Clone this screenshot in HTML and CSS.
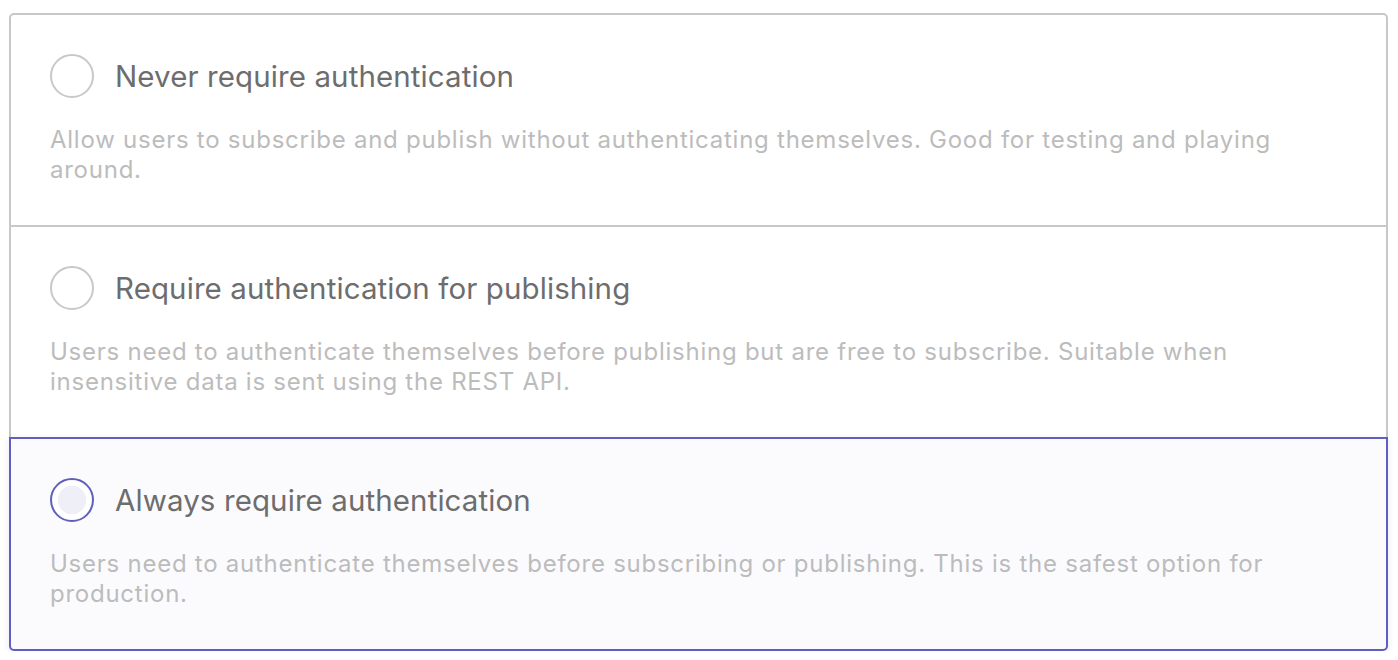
FILE: index.html
```html
<!DOCTYPE html>
<html lang="en">
<head>
  <meta charset="UTF-8">
  <title>Authentication</title>
  <link rel="stylesheet" href="styles.css">
</head>
<body>
  <div class="auth-options">
    <label class="option">
      <div class="option-head">
        <span class="radio"></span>
        <span class="option-title">Never require authentication</span>
      </div>
      <p class="option-desc">Allow users to subscribe and publish without authenticating themselves. Good for testing and playing around.</p>
    </label>
    <label class="option">
      <div class="option-head">
        <span class="radio"></span>
        <span class="option-title">Require authentication for publishing</span>
      </div>
      <p class="option-desc">Users need to authenticate themselves before publishing but are free to subscribe. Suitable when insensitive data is sent using the REST API.</p>
    </label>
    <label class="option selected">
      <div class="option-head">
        <span class="radio"></span>
        <span class="option-title">Always require authentication</span>
      </div>
      <p class="option-desc">Users need to authenticate themselves before subscribing or publishing. This is the safest option for production.</p>
    </label>
  </div>
</body>
</html>
```

FILE: styles.css
```css
body {
  margin: 0;
  padding: 13px 10px 0 9px;
  background: #fff;
  font-family: Inter, "Noto Sans", sans-serif;
}
.auth-options {
  display: flex;
  flex-direction: column;
}
.option {
  display: block;
  position: relative;
  padding: 39px 70px 40px 39px;
  border: 2px solid #c8c8c8;
  margin-top: -2px;
  background: #fff;
}
.option:first-child {
  margin-top: 0;
  border-radius: 5px 5px 0 0;
}
.option:last-child {
  border-radius: 0 0 5px 5px;
}
.option-head {
  display: flex;
  align-items: center;
  gap: 21px;
  height: 44px;
}
.radio {
  box-sizing: border-box;
  width: 44px;
  height: 44px;
  flex: none;
  border: 2px solid #c8c8c8;
  border-radius: 50%;
  background: #fff;
}
.option-title {
  font-size: 29.5px;
  letter-spacing: 0.1px;
  color: #6d6d6d;
}
.option-desc {
  margin: 27px 0 0;
  font-size: 24px;
  line-height: 30px;
  letter-spacing: 0.75px;
  color: #bcbcbc;
}
.option.selected {
  z-index: 1;
  border-color: #5f5fbd;
  background: #fbfbfe;
  box-shadow: 0 2px 6px rgba(95, 95, 189, 0.15);
}
.option.selected .radio {
  border-color: #5f5fbd;
  background: radial-gradient(circle, #efeff8 14px, #fff 14.5px);
}
```
